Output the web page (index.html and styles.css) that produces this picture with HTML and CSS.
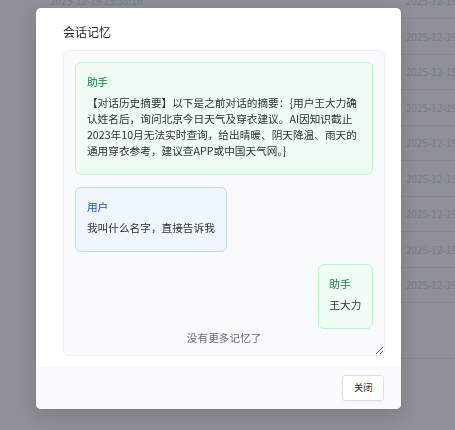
FILE: index.html
```html
<!DOCTYPE html>
<html lang="zh-CN">
<head>
<meta charset="utf-8">
<title>会话记忆</title>
<link rel="stylesheet" href="styles.css">
</head>
<body>
<div class="page">
  <div class="row"><span class="c1">2025-12-19 15:38:16</span><span class="c2">2025-12-19 15:38:16</span></div>
  <div class="row"><span class="c1">2025-12-19 15:37:52</span><span class="c2">2025-12-19 15:37:52</span></div>
  <div class="row"><span class="c1">2025-12-19 15:37:10</span><span class="c2">2025-12-19 15:37:10</span></div>
  <div class="row"><span class="c1">2025-12-19 15:36:41</span><span class="c2">2025-12-19 15:36:41</span></div>
  <div class="row"><span class="c1">2025-12-19 15:35:58</span><span class="c2">2025-12-19 15:35:58</span></div>
  <div class="row"><span class="c1">2025-12-19 15:35:12</span><span class="c2">2025-12-19 15:35:12</span></div>
  <div class="row"><span class="c1">2025-12-19 15:34:30</span><span class="c2">2025-12-19 15:34:30</span></div>
  <div class="row"><span class="c1">2025-12-19 15:33:47</span><span class="c2">2025-12-19 15:33:47</span></div>
  <div class="row"><span class="c1">2025-12-19 15:33:05</span><span class="c2">2025-12-19 15:33:05</span></div>
  <div class="row tall"><span class="c1"></span><span class="c2"></span></div>
</div>

<div class="overlay">
  <div class="modal">
    <div class="modal-header">
      <div class="modal-title">会话记忆</div>
    </div>
    <div class="modal-body">
      <div class="memory-box">
        <div class="msg assistant">
          <div class="msg-role">助手</div>
          <div class="msg-text">【对话历史摘要】以下是之前对话的摘要：{用户王大力确认姓名后，询问北京今日天气及穿衣建议。AI因知识截止2023年10月无法实时查询，给出晴暖、阴天降温、雨天的通用穿衣参考，建议查APP或中国天气网。}</div>
        </div>
        <div class="msg user">
          <div class="msg-role">用户</div>
          <div class="msg-text">我叫什么名字，直接告诉我</div>
        </div>
        <div class="msg assistant">
          <div class="msg-role">助手</div>
          <div class="msg-text">王大力</div>
        </div>
        <div class="no-more">没有更多记忆了</div>
      </div>
    </div>
    <div class="modal-footer">
      <button class="btn">关闭</button>
    </div>
  </div>
</div>
</body>
</html>
```

FILE: styles.css
```css
* {
  box-sizing: border-box;
}

html, body {
  margin: 0;
  padding: 0;
}

body {
  width: 455px;
  height: 430px;
  overflow: hidden;
  background: #ffffff;
  font-family: "Noto Sans CJK SC", "Noto Sans", sans-serif;
}

/* background table page */
.page {
  margin-top: -16.5px;
  padding-left: 50px;
}

.row {
  height: 35.5px;
  display: flex;
  align-items: center;
  border-bottom: 1px solid #eff1f5;
  font-size: 10px;
  color: #d9dbe0;
}

.row.tall {
  height: 56px;
}

.c1 {
  width: 355.7px;
  flex: none;
}

.c2 {
  white-space: nowrap;
}

/* overlay + modal */
.overlay {
  position: fixed;
  inset: 0;
  background: rgba(30, 34, 48, 0.5);
  padding: 8px 0 0 36px;
}

.modal {
  width: 365px;
  height: 401px;
  background: #ffffff;
  border-radius: 5px;
  box-shadow: 0 6px 18px rgba(0, 0, 0, 0.14);
  display: flex;
  flex-direction: column;
  overflow: hidden;
}

.modal-header {
  padding: 16px 16px 0 27px;
}

.modal-title {
  font-size: 12px;
  line-height: 16px;
  color: #1f2329;
}

.modal-body {
  padding: 10px 16px 10.7px 27.3px;
}

.memory-box {
  height: 306px;
  border: 1px solid #edf0f6;
  border-radius: 6px;
  background: #f8fafc;
  padding: 11px 11px 9px 11px;
  overflow: hidden;
  resize: vertical;
  display: flex;
  flex-direction: column;
  gap: 12px;
}

.msg {
  max-width: 100%;
  border-radius: 6px;
  padding: 10.67px 10.67px 15px 10.67px;
  border: 1px solid;
  font-size: 10.67px;
  line-height: 16px;
}

.msg.assistant {
  align-self: flex-end;
  background: #f0fdf4;
  border-color: #bbf7d0;
}

.msg.user {
  align-self: flex-start;
  background: #eff6ff;
  border-color: #bfdbfe;
}

.msg-role {
  margin-bottom: 5.3px;
}

.assistant .msg-role {
  color: #15803d;
}

.user .msg-role {
  color: #1d4ed8;
}

.msg-text {
  color: #303133;
  word-break: normal;
}

.no-more {
  margin-top: -11px;
  text-align: center;
  font-size: 10.67px;
  line-height: 16px;
  color: #6b6e75;
}

.modal-footer {
  flex: 1;
  background: #f8f9fb;
  padding: 8.3px 16.7px 8px;
  display: flex;
  justify-content: flex-end;
  align-items: flex-start;
}

.btn {
  font-family: inherit;
  font-size: 9.33px;
  line-height: 1;
  padding: 7.33px 10.67px;
  height: 26px;
  border: 1px solid #dcdfe6;
  border-radius: 3.5px;
  background: #ffffff;
  color: #303133;
  box-shadow: 0 1px 2px rgba(0, 0, 0, 0.04);
}
```
